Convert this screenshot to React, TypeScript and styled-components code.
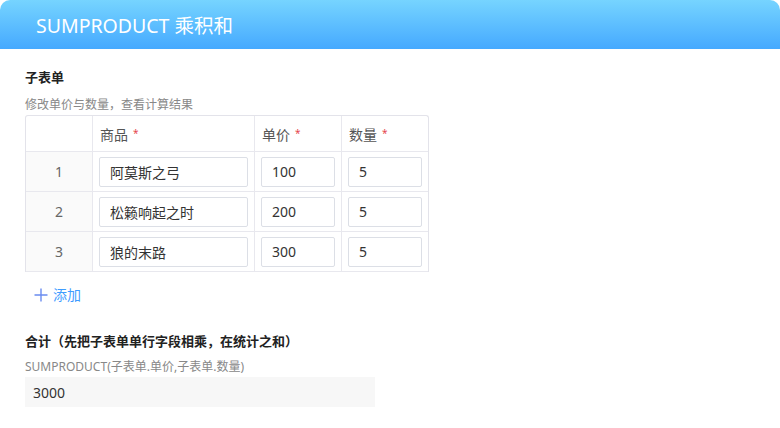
import React from 'react'
import styled, { createGlobalStyle } from 'styled-components'

const GlobalStyle = createGlobalStyle`
  body {
    margin: 0;
    background: #fff;
    font-family: 'Noto Sans', 'Noto Sans CJK SC', sans-serif;
    color: #333;
  }
`

const Page = styled.div`
  width: 780px;
  height: 428px;
  overflow: hidden;
  background: #fff;
`

const Header = styled.div`
  height: 49px;
  display: flex;
  align-items: center;
  padding-left: 36px;
  border-radius: 10px 10px 0 0;
  background: linear-gradient(180deg, #76d4ff 0%, #45a9ff 100%);
  color: #fff;
  font-size: 19.5px;
`

const Body = styled.div`
  padding: 18px 25px 0;
`

const Label = styled.div`
  font-size: 13px;
  font-weight: bold;
  line-height: 20px;
  color: #222;
`

const Hint = styled.div`
  font-size: 12px;
  line-height: 18px;
  color: #888;
  margin-top: 9px;
`

const Table = styled.table`
  border-collapse: separate;
  border-spacing: 0;
  border: 1px solid #e3e3ea;
  border-bottom: none;
  border-radius: 3px 3px 0 0;
  table-layout: fixed;
  width: 404px;
  margin-top: 1px;
`

const Th = styled.th<{ $w: number }>`
  box-sizing: border-box;
  width: ${({ $w }) => $w}px;
  height: 36px;
  padding: 0 7px;
  text-align: left;
  font-weight: normal;
  font-size: 14px;
  color: #555;
  border-bottom: 1px solid #e8e8ee;
  & + & {
    border-left: 1px solid #e8e8ee;
  }
`

const Star = styled.span`
  color: #e5484d;
  font-size: 10px;
  margin-left: 5px;
  vertical-align: 3px;
`

const Td = styled.td`
  box-sizing: border-box;
  height: 40px;
  padding: 0 6px;
  border-bottom: 1px solid #e8e8ee;
  & + & {
    border-left: 1px solid #e8e8ee;
  }
`

const IndexCell = styled(Td)`
  text-align: center;
  font-size: 14px;
  color: #666;
  background: #fafafa;
`

const Input = styled.input`
  box-sizing: border-box;
  width: 100%;
  height: 30px;
  padding: 0 10px;
  border: 1px solid #dcdfe6;
  border-radius: 2px;
  font-family: inherit;
  font-size: 14px;
  color: #333;
  outline: none;
`

const AddButton = styled.div`
  display: flex;
  align-items: center;
  gap: 5px;
  margin: 13px 0 0 9px;
  font-size: 14px;
  color: #3f9cff;
  line-height: 20px;
`

const Total = styled.div`
  margin-top: 26px;
`

const Formula = styled(Hint)`
  margin-top: 7px;
`

const Result = styled.div`
  box-sizing: border-box;
  width: 350px;
  height: 30px;
  margin-top: 1px;
  padding-left: 8px;
  display: flex;
  align-items: center;
  background: #f7f7f7;
  font-size: 14px;
  color: #333;
`

const rows = [
  { name: '阿莫斯之弓', price: '100', qty: '5' },
  { name: '松籁响起之时', price: '200', qty: '5' },
  { name: '狼的末路', price: '300', qty: '5' },
]

const PlusIcon = () => (
  <svg width="14" height="14" viewBox="0 0 14 14">
    <path d="M7 0.5v13M0.5 7h13" stroke="#6a8cf0" strokeWidth="1.4" fill="none" />
  </svg>
)

export default function App() {
  return (
    <Page>
      <GlobalStyle />
      <Header>SUMPRODUCT 乘积和</Header>
      <Body>
        <Label>子表单</Label>
        <Hint>修改单价与数量，查看计算结果</Hint>
        <Table>
          <thead>
            <tr>
              <Th $w={66} />
              <Th $w={162}>
                商品<Star>*</Star>
              </Th>
              <Th $w={87}>
                单价<Star>*</Star>
              </Th>
              <Th $w={87}>
                数量<Star>*</Star>
              </Th>
            </tr>
          </thead>
          <tbody>
            {rows.map((r, i) => (
              <tr key={i}>
                <IndexCell>{i + 1}</IndexCell>
                <Td>
                  <Input defaultValue={r.name} />
                </Td>
                <Td>
                  <Input defaultValue={r.price} />
                </Td>
                <Td>
                  <Input defaultValue={r.qty} />
                </Td>
              </tr>
            ))}
          </tbody>
        </Table>
        <AddButton>
          <PlusIcon />
          添加
        </AddButton>
        <Total>
          <Label>合计（先把子表单单行字段相乘，在统计之和）</Label>
          <Formula>SUMPRODUCT(子表单.单价,子表单.数量)</Formula>
          <Result>3000</Result>
        </Total>
      </Body>
    </Page>
  )
}
